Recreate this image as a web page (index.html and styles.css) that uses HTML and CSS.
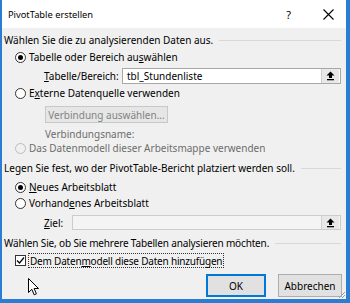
FILE: index.html
```html
<!DOCTYPE html>
<html lang="de">
<head>
<meta charset="utf-8">
<title>PivotTable erstellen</title>
<link rel="stylesheet" href="styles.css">
</head>
<body>
<div class="dialog">
  <div class="titlebar">
    <span class="title">PivotTable erstellen</span>
    <span class="help">?</span>
    <svg class="close" width="11" height="11" viewBox="0 0 11 11"><path d="M0.5 0.5 L10.5 10.5 M10.5 0.5 L0.5 10.5" stroke="#000" stroke-width="1.1" fill="none"/></svg>
  </div>
  <div class="content">
    <div class="heading h1"><span>Wählen Sie die zu analysierenden Daten aus.</span></div>
    <div class="row r1"><span class="radio checked"></span><span class="lbl">Tabelle oder Bereich au<u>s</u>wählen</span></div>
    <div class="field f1">
      <span class="flabel"><u>T</u>abelle/Bereich:</span>
      <div class="input input-wide">
        <span class="val">tbl_Stundenliste</span>
        <span class="pick"><svg width="9" height="10" viewBox="0 0 9 10"><path d="M4.5 0.5 L8.5 4.5 L6 4.5 L6 7 L3 7 L3 4.5 L0.5 4.5 Z" fill="#000"/><rect x="1" y="8" width="7" height="1.3" fill="#000"/></svg></span>
      </div>
    </div>
    <div class="row r2"><span class="radio"></span><span class="lbl">E<u>x</u>terne Datenquelle verwenden</span></div>
    <div class="btnrow"><span class="btn-disabled">Verbindung auswählen...</span></div>
    <div class="row r3 indent disabled">Verbindungsname:</div>
    <div class="row r4 disabled"><span class="radio off"></span><span class="lbl">Das Datenmodell dieser Arbeitsmappe verwenden</span></div>
    <div class="heading h2"><span>Legen Sie fest, wo der PivotTable-Bericht platziert werden soll.</span></div>
    <div class="row r5"><span class="radio checked"></span><span class="lbl"><u>N</u>eues Arbeitsblatt</span></div>
    <div class="row r6"><span class="radio"></span><span class="lbl">Vorhand<u>e</u>nes Arbeitsblatt</span></div>
    <div class="field f2">
      <span class="flabel"><u>Z</u>iel:</span>
      <div class="input input-disabled">
        <span class="val"></span>
        <span class="pick"><svg width="9" height="10" viewBox="0 0 9 10"><path d="M4.5 0.5 L8.5 4.5 L6 4.5 L6 7 L3 7 L3 4.5 L0.5 4.5 Z" fill="#000"/><rect x="1" y="8" width="7" height="1.3" fill="#000"/></svg></span>
      </div>
    </div>
    <div class="heading h3"><span>Wählen Sie, ob Sie mehrere Tabellen analysieren möchten.</span></div>
    <div class="row r7"><span class="check"><svg width="9" height="9" viewBox="0 0 9 9"><path d="M1 4.5 L3.5 7 L8 1.5" stroke="#000" stroke-width="1.2" fill="none"/></svg></span><span class="lbl focus">Dem Daten<u>m</u>odell diese Daten hinzufügen</span></div>
    <div class="buttons">
      <span class="btn btn-default">OK</span>
      <span class="btn">Abbrechen</span>
    </div>
  </div>
  <svg class="cursor" width="12" height="18" viewBox="0 0 12 18"><path d="M0.5 0.5 L0.5 14.5 L3.8 11.3 L6.2 16.8 L8.4 15.8 L6.1 10.5 L10.5 10.5 Z" fill="#fff" stroke="#000" stroke-width="1" stroke-linejoin="round"/></svg>
  <svg class="grip" width="8" height="8" viewBox="0 0 8 8"><path d="M7 1 L1 7 M7 4 L4 7" stroke="#9a9a9a" stroke-width="1" fill="none"/></svg>
</div>
</body>
</html>
```
FILE: styles.css
```css
html, body {
  margin: 0;
  padding: 0;
  background: #f0f0f0;
}
body {
  width: 350px;
  height: 303px;
  overflow: hidden;
  font-family: "Noto Sans", "Open Sans", sans-serif;
  font-size: 10px;
  color: #000;
}
.dialog {
  position: relative;
  box-sizing: border-box;
  width: 350px;
  height: 303px;
  border-left: 2px solid #2b7cd3;
  border-right: 4px solid #2b7cd3;
  border-bottom: 4px solid #2b7cd3;
  background: #f0f0f0;
}
.titlebar {
  height: 28px;
  background: #fff;
  display: flex;
  align-items: center;
}
.title {
  padding-left: 6px;
  font-size: 9.3px;
}
.help {
  margin-left: auto;
  font-size: 11px;
  margin-right: 32px;
}
.close {
  margin-right: 12px;
}
.content {
  display: flex;
  flex-direction: column;
  padding: 0 4px 0 2px;
}
.heading {
  height: 14px;
  display: flex;
  align-items: center;
  white-space: nowrap;
}
.heading::after {
  content: "";
  flex: 1;
  margin-left: 6px;
  border-top: 1px solid #d8d8d8;
  margin-right: 1px;
}
.h1 { margin-top: 5px; }
.h2 { margin-top: 6px; }
.h3 { margin-top: 6px; letter-spacing: -0.15px; }
.row {
  height: 14px;
  display: flex;
  align-items: center;
  padding-left: 11px;
  white-space: nowrap;
}
.r1 { margin-top: 3px; }
.r2 { margin-top: 2px; }
.r3 { margin-top: 4px; }
.r4 { margin-top: 0; }
.r5 { margin-top: 5px; }
.r6 { margin-top: 2px; }
.r7 { margin-top: 3px; height: 15px; }
.row.indent { padding-left: 41px; }
.disabled { color: #6d6d6d; }
.radio {
  box-sizing: border-box;
  width: 11px;
  height: 11px;
  border: 1px solid #333;
  border-radius: 50%;
  background: #fff;
  display: flex;
  align-items: center;
  justify-content: center;
  flex: none;
}
.radio.checked::after {
  content: "";
  width: 5px;
  height: 5px;
  border-radius: 50%;
  background: #000;
}
.radio.off {
  border-color: #bcbcbc;
  background: #f0f0f0;
}
.lbl { margin-left: 3px; }
.field {
  display: flex;
  align-items: center;
  padding-left: 40px;
  white-space: nowrap;
}
.f1 { margin-top: 4px; height: 16px; }
.f2 { margin-top: 5px; height: 15px; }
.flabel { width: 78px; flex: none; }
.f2 .flabel { width: 28px; }
.input {
  box-sizing: border-box;
  flex: 1;
  height: 100%;
  border: 1px solid #a8a8a8;
  background: #fff;
  display: flex;
  align-items: center;
  margin-right: 1px;
}
.input-disabled {
  background: #f4f4f4;
  border-color: #cccccc;
}
.val { flex: 1; padding-left: 4px; }
.pick {
  box-sizing: border-box;
  width: 18px;
  height: 100%;
  margin-right: 1px;
  border-left: 1px solid #cfcfcf;
  background: #e8e8e8;
  display: flex;
  align-items: center;
  justify-content: center;
}
.btnrow {
  display: flex;
  margin-top: 6px;
  padding-left: 41px;
}
.btn-disabled {
  box-sizing: border-box;
  width: 123px;
  height: 17px;
  border: 1px solid #c8c8c8;
  background: #e6e6e6;
  color: #838383;
  display: flex;
  align-items: center;
  justify-content: center;
  white-space: nowrap;
}
.check {
  box-sizing: border-box;
  width: 11px;
  height: 11px;
  border: 1px solid #333;
  background: #fff;
  display: flex;
  align-items: center;
  justify-content: center;
  flex: none;
}
.focus {
  margin-left: 2px;
  padding: 0 1px;
  height: 15px;
  box-sizing: border-box;
  border: 1px dotted #333;
  display: flex;
  align-items: center;
  letter-spacing: -0.2px;
}
.buttons {
  display: flex;
  justify-content: flex-end;
  gap: 12px;
  margin-top: 6px;
}
.btn {
  box-sizing: border-box;
  width: 64px;
  height: 23px;
  border: 1px solid #adadad;
  background: #e1e1e1;
  display: flex;
  align-items: center;
  justify-content: center;
}
.btn-default {
  width: 60px;
  border: 2px solid #0078d7;
}
.cursor {
  position: absolute;
  left: 26px;
  top: 278px;
}
.grip {
  position: absolute;
  right: 0;
  bottom: 0;
}
```
